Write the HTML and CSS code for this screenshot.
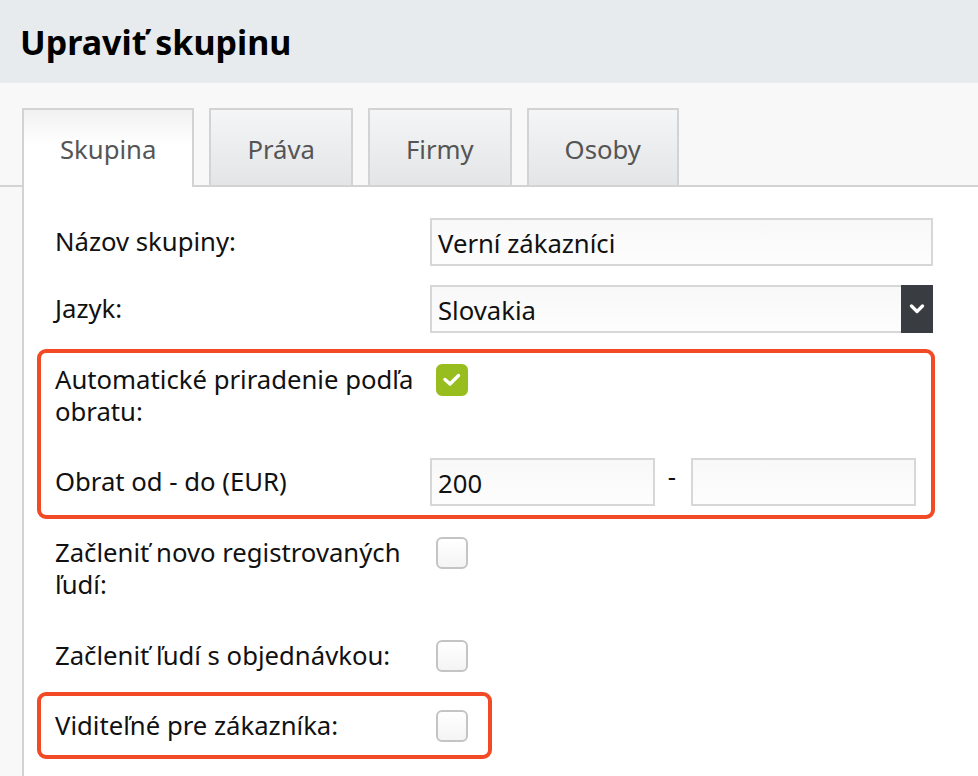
FILE: index.html
```html
<!DOCTYPE html>
<html lang="sk">
<head>
<meta charset="utf-8">
<title>Upraviť skupinu</title>
<link rel="stylesheet" href="styles.css">
</head>
<body>
<header class="header"><h1>Upraviť skupinu</h1></header>
<main class="main">
  <nav class="tabs">
    <div class="tab active">Skupina</div>
    <div class="tab">Práva</div>
    <div class="tab">Firmy</div>
    <div class="tab">Osoby</div>
  </nav>
  <section class="panel">
    <div class="form">
      <div class="row row-mid r1">
        <div class="label">Názov skupiny:</div>
        <div class="field">Verní zákazníci</div>
      </div>
      <div class="row row-mid r2">
        <div class="label">Jazyk:</div>
        <div class="field select">
          <span class="select-text">Slovakia</span>
          <span class="arrow"><svg width="16" height="10" viewBox="0 0 16 10"><path d="M2.5 2 L8 7.5 L13.5 2" fill="none" stroke="#fff" stroke-width="3.2" stroke-linecap="round" stroke-linejoin="round"/></svg></span>
        </div>
      </div>
      <div class="hl hl1">
        <div class="row row-top">
          <div class="label">Automatické priradenie podľa obratu:</div>
          <div class="cb on"><svg width="28" height="28" viewBox="0 0 28 28"><path d="M7 13.5 L12 18 L20.5 9.5" fill="none" stroke="#fff" stroke-width="3.4" stroke-linecap="round" stroke-linejoin="round"/></svg></div>
        </div>
        <div class="row row-mid r4">
          <div class="label">Obrat od - do (EUR)</div>
          <div class="range">
            <div class="field short">200</div>
            <span class="dash">-</span>
            <div class="field short"></div>
          </div>
        </div>
      </div>
      <div class="row row-top r5">
        <div class="label">Začleniť novo registrovaných ľudí:</div>
        <div class="cb"></div>
      </div>
      <div class="row row-top r6">
        <div class="label">Začleniť ľudí s objednávkou:</div>
        <div class="cb"></div>
      </div>
      <div class="hl hl2">
        <div class="row row-top">
          <div class="label">Viditeľné pre zákazníka:</div>
          <div class="cb"></div>
        </div>
      </div>
    </div>
  </section>
</main>
</body>
</html>
```

FILE: styles.css
```css
html, body {
  margin: 0;
  padding: 0;
}
body {
  font-family: "Noto Sans", "Open Sans", sans-serif;
  background: #f8f8f8;
  color: #111;
  overflow: hidden;
}
.header {
  height: 83px;
  background: #e8ebee;
  display: flex;
  align-items: center;
  padding-left: 20px;
}
.header h1 {
  margin: 0;
  font-size: 34px;
  font-weight: 700;
  color: #000;
  line-height: 1;
}
.main {
  padding-top: 25px;
}
.tabs {
  display: flex;
  align-items: flex-start;
  gap: 15px;
  padding-left: 22px;
  border-bottom: 2px solid #d3d3d3;
  height: 77px;
}
.tab {
  box-sizing: border-box;
  height: 77px;
  padding: 3px 36px 0;
  border: 2px solid #d3d3d3;
  border-bottom: none;
  display: flex;
  align-items: center;
  font-size: 25.7px;
  color: #555;
  background: linear-gradient(#f4f5f6, #e3e5e7);
}
.tab.active {
  height: 79px;
  padding-bottom: 2px;
  background: linear-gradient(#f1f1f1, #ffffff 45%);
  position: relative;
  z-index: 1;
}
.panel {
  margin-left: 22px;
  border-left: 2px solid #d3d3d3;
  background: #fff;
  min-height: 620px;
}
.form {
  padding: 31px 0 0 31px;
}
.row {
  display: grid;
  grid-template-columns: 375px 503px;
  font-size: 25.7px;
  line-height: 32px;
}
.row-mid { align-items: center; }
.row-top { align-items: start; }
.r1 { margin-bottom: 19px; }
.r4 { margin-top: 30px; }
.r5 { margin-top: 18px; }
.r6 { margin-top: 39px; }
.label {
  color: #111;
  padding-right: 10px;
}
.field {
  box-sizing: border-box;
  height: 48px;
  border: 2px solid #d7d7d7;
  background: linear-gradient(#f8f8f8, #fdfdfd);
  padding: 3px 0 0 6px;
  display: flex;
  align-items: center;
  font-size: 25.7px;
  color: #111;
}
.select {
  padding-right: 0;
  justify-content: space-between;
}
.arrow {
  width: 32px;
  align-self: stretch;
  margin: -5px -2px -2px 0;
  background: #393c40;
  display: flex;
  align-items: center;
  justify-content: center;
}
.hl {
  box-sizing: border-box;
  border: 4px solid #f14a24;
  border-radius: 9px;
  margin-left: -18px;
  padding-left: 14px;
}
.hl1 {
  width: 898px;
  margin-top: 16px;
  padding-top: 11px;
  padding-bottom: 9px;
}
.hl2 {
  width: 455px;
  margin-top: 20px;
  padding-top: 14px;
  padding-bottom: 13px;
}
.range {
  display: flex;
  align-items: center;
}
.field.short {
  width: 225px;
}
.dash {
  width: 34px;
  text-align: center;
  font-size: 25.7px;
  margin-top: -10px;
  padding-right: 2px;
}
.cb {
  box-sizing: border-box;
  width: 32px;
  height: 32px;
  margin-left: 6px;
  border: 2px solid #c4c4c4;
  border-radius: 6px;
  background: linear-gradient(#fff, #f4f4f4);
  display: flex;
  align-items: center;
  justify-content: center;
}
.cb.on {
  background: #97bd1f;
  border-color: #97bd1f;
}
```
